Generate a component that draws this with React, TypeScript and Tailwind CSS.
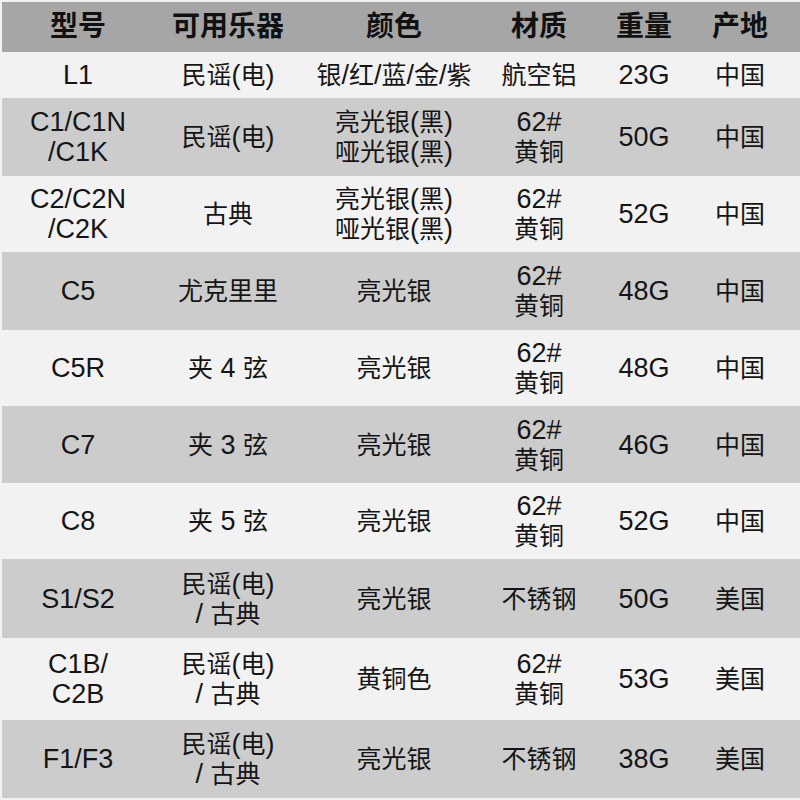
import React from "react";

const rows: { h: string; bg: string; cells: string[][] }[] = [
  { h: "h-[46px]", bg: "bg-[#f2f2f2]", cells: [["L1"], ["民谣(电)"], ["银/红/蓝/金/紫"], ["航空铝"], ["23G"], ["中国"]] },
  { h: "h-[78px]", bg: "bg-[#cccccc]", cells: [["C1/C1N", "/C1K"], ["民谣(电)"], ["亮光银(黑)", "哑光银(黑)"], ["62#", "黄铜"], ["50G"], ["中国"]] },
  { h: "h-[76px]", bg: "bg-[#f2f2f2]", cells: [["C2/C2N", "/C2K"], ["古典"], ["亮光银(黑)", "哑光银(黑)"], ["62#", "黄铜"], ["52G"], ["中国"]] },
  { h: "h-[78px]", bg: "bg-[#cccccc]", cells: [["C5"], ["尤克里里"], ["亮光银"], ["62#", "黄铜"], ["48G"], ["中国"]] },
  { h: "h-[76px]", bg: "bg-[#f2f2f2]", cells: [["C5R"], ["夹 4 弦"], ["亮光银"], ["62#", "黄铜"], ["48G"], ["中国"]] },
  { h: "h-[77px]", bg: "bg-[#cccccc]", cells: [["C7"], ["夹 3 弦"], ["亮光银"], ["62#", "黄铜"], ["46G"], ["中国"]] },
  { h: "h-[76px]", bg: "bg-[#f2f2f2]", cells: [["C8"], ["夹 5 弦"], ["亮光银"], ["62#", "黄铜"], ["52G"], ["中国"]] },
  { h: "h-[79px]", bg: "bg-[#cccccc]", cells: [["S1/S2"], ["民谣(电)", "/ 古典"], ["亮光银"], ["不锈钢"], ["50G"], ["美国"]] },
  { h: "h-[82px]", bg: "bg-[#f2f2f2]", cells: [["C1B/", "C2B"], ["民谣(电)", "/ 古典"], ["黄铜色"], ["62#", "黄铜"], ["53G"], ["美国"]] },
  { h: "h-[78px]", bg: "bg-[#cccccc]", cells: [["F1/F3"], ["民谣(电)", "/ 古典"], ["亮光银"], ["不锈钢"], ["38G"], ["美国"]] },
];

const widths = ["w-[152px]", "w-[148px]", "w-[184px]", "w-[106px]", "w-[104px]", "w-[88px]"];
const headers = ["型号", "可用乐器", "颜色", "材质", "重量", "产地"];

function Runs({ text }: { text: string }) {
  const parts = text.match(/[\u3400-\u9fff]+|[^\u3400-\u9fff]+/g) || [];
  return (
    <>
      {parts.map((p, i) =>
        /[\u3400-\u9fff]/.test(p) ? (
          <span key={i}>{p}</span>
        ) : (
          <span key={i} className="text-[27px]">{p}</span>
        )
      )}
    </>
  );
}

export default function App() {
  return (
    <div
      className="w-[800px] h-[800px] bg-[#f2f2f2] pt-[2px] pl-[2px] overflow-hidden text-[#151515]"
      style={{ fontFamily: '"Liberation Sans", Arial, "Noto Sans CJK SC", sans-serif' }}
    >
      <div className="flex h-[50px] bg-[#a6a6a6] items-center">
        {headers.map((t, i) => (
          <div key={i} className={`${widths[i]} shrink-0 text-center text-[28px] font-bold text-[#111]`}>
            {t}
          </div>
        ))}
      </div>
      {rows.map((r, ri) => (
        <div key={ri} className={`flex ${r.h} ${r.bg} items-center`}>
          {r.cells.map((c, ci) => (
            <div key={ci} className={`${widths[ci]} shrink-0 flex flex-col items-center text-[25px] leading-[30px]`}>
              {c.map((l, li) => (
                <div key={li} className="whitespace-pre h-[30px] flex items-center">
                  <Runs text={l} />
                </div>
              ))}
            </div>
          ))}
        </div>
      ))}
    </div>
  );
}
